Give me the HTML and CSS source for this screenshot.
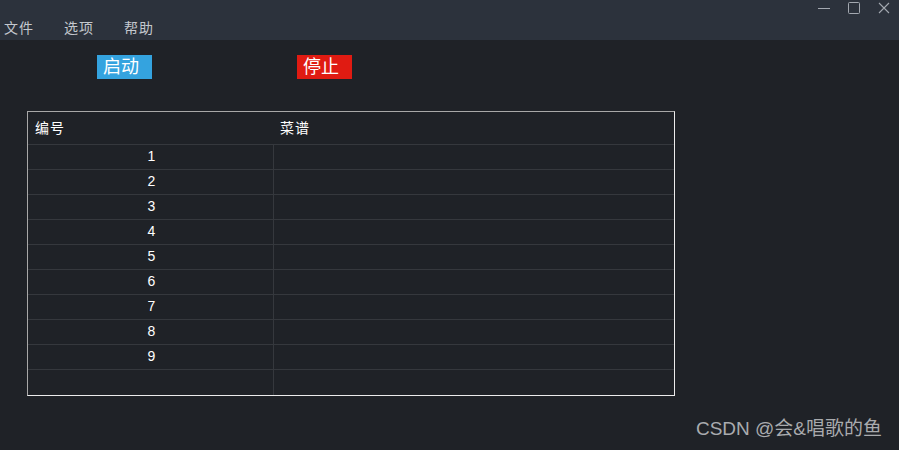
FILE: index.html
```html
<!DOCTYPE html>
<html>
<head>
<meta charset="utf-8">
<link rel="stylesheet" href="styles.css">
</head>
<body>
<div class="titlebar">
  <div class="controls">
    <svg class="ctl" width="14" height="14" viewBox="0 0 14 14"><line x1="1" y1="7.5" x2="13" y2="7.5" stroke="#a3a8b0" stroke-width="1"/></svg>
    <svg class="ctl" width="14" height="14" viewBox="0 0 14 14"><rect x="1.5" y="1.5" width="11" height="11" rx="1" fill="none" stroke="#a3a8b0" stroke-width="1"/></svg>
    <svg class="ctl" width="14" height="14" viewBox="0 0 14 14"><path d="M2 2 L12 12 M12 2 L2 12" stroke="#a3a8b0" stroke-width="1.1"/></svg>
  </div>
  <div class="menu">
    <span class="menu-item">文件</span>
    <span class="menu-item">选项</span>
    <span class="menu-item">帮助</span>
  </div>
</div>
<div class="buttons">
  <div class="btn btn-start">启动</div>
  <div class="btn btn-stop">停止</div>
</div>
<div class="table">
  <div class="thead">
    <div class="th c0">编号</div>
    <div class="th c1">菜谱</div>
  </div>
  <div class="row"><div class="td c0">1</div><div class="td c1"></div></div>
  <div class="row"><div class="td c0">2</div><div class="td c1"></div></div>
  <div class="row"><div class="td c0">3</div><div class="td c1"></div></div>
  <div class="row"><div class="td c0">4</div><div class="td c1"></div></div>
  <div class="row"><div class="td c0">5</div><div class="td c1"></div></div>
  <div class="row"><div class="td c0">6</div><div class="td c1"></div></div>
  <div class="row"><div class="td c0">7</div><div class="td c1"></div></div>
  <div class="row"><div class="td c0">8</div><div class="td c1"></div></div>
  <div class="row"><div class="td c0">9</div><div class="td c1"></div></div>
  <div class="row last"><div class="td c0"></div><div class="td c1"></div></div>
</div>
<div class="watermark">CSDN @会&amp;唱歌的鱼</div>
</body>
</html>
```
FILE: styles.css
```css
html, body {
  margin: 0;
  padding: 0;
}
body {
  width: 899px;
  height: 450px;
  background: #1f2227;
  font-family: "Liberation Sans", "Noto Sans CJK SC", sans-serif;
  color: #ffffff;
  position: relative;
  overflow: hidden;
}
.titlebar {
  height: 40px;
  background: #2c323c;
  display: flex;
  flex-direction: column;
}
.controls {
  display: flex;
  justify-content: flex-end;
  height: 16px;
  padding-top: 1px;
  gap: 16px;
  padding-right: 8px;
}
.ctl {
  display: block;
}
.menu {
  display: flex;
  padding-left: 4px;
  padding-top: 1px;
}
.menu-item {
  font-size: 14px;
  line-height: 20px;
  color: #c4c8ce;
  width: 60px;
  letter-spacing: 1px;
}
.buttons {
  display: flex;
  margin-top: 15px;
  padding-left: 97px;
  gap: 145px;
}
.btn {
  width: 55px;
  height: 24px;
  box-sizing: border-box;
  padding-left: 6px;
  font-size: 18px;
  line-height: 24px;
  color: #ffffff;
}
.btn-start {
  background: #34a3df;
}
.btn-stop {
  background: #e01b12;
}
.table {
  margin-top: 32px;
  margin-left: 27px;
  width: 648px;
  height: 285px;
  box-sizing: border-box;
  border: 1px solid;
  border-color: #a8a8a8 #ececec #ececec #a8a8a8;
  display: flex;
  flex-direction: column;
}
.thead {
  display: flex;
  height: 33px;
  box-sizing: border-box;
  border-bottom: 1px solid #35383d;
}
.th {
  font-size: 14px;
  line-height: 32px;
  color: #ffffff;
  letter-spacing: 1px;
}
.c0 {
  width: 246px;
  box-sizing: border-box;
}
.th.c0 {
  padding-left: 7px;
}
.th.c1 {
  padding-left: 6px;
}
.row {
  display: flex;
  height: 25px;
  box-sizing: border-box;
  border-bottom: 1px solid #35383d;
}
.row.last {
  border-bottom: none;
}
.td {
  font-size: 14px;
  line-height: 22px;
}
.td.c0 {
  border-right: 1px solid #35383d;
  text-align: center;
  padding-left: 2px;
}
.td.c1 {
  flex: 1;
}
.watermark {
  position: absolute;
  right: 17px;
  top: 416px;
  font-size: 19px;
  line-height: 26px;
  color: #a9abae;
}
```
